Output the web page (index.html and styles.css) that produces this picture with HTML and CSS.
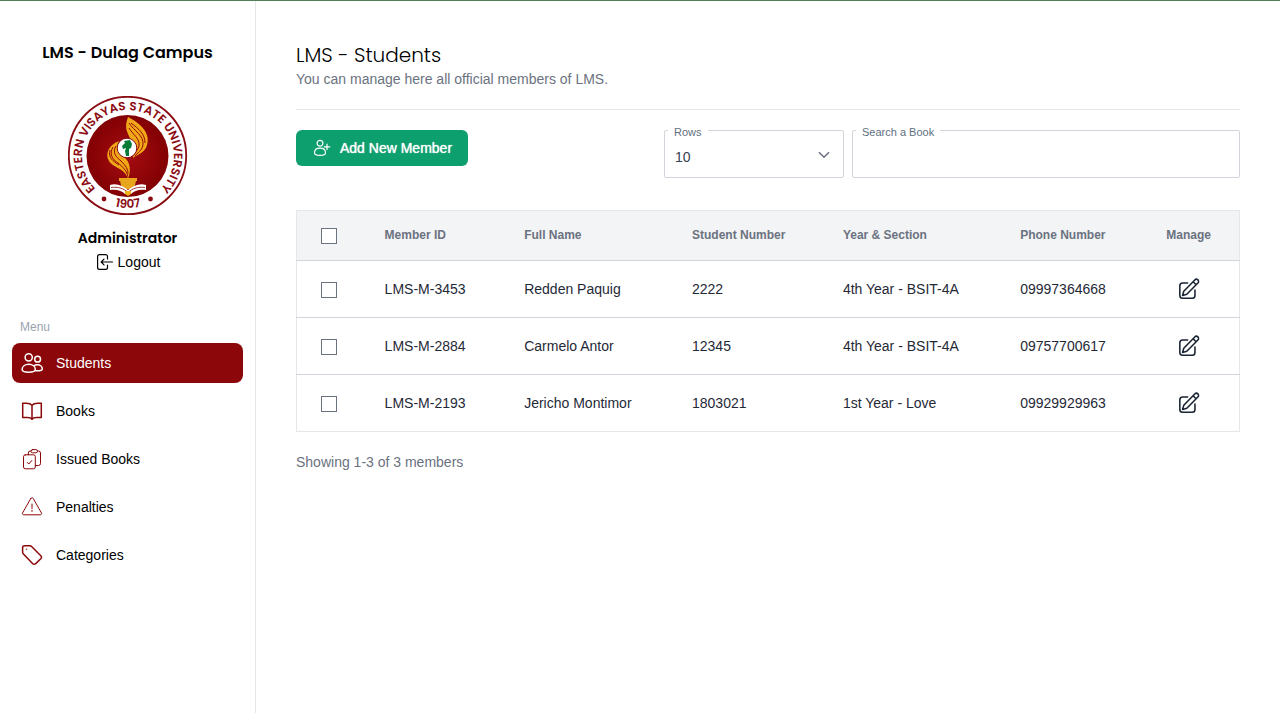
FILE: index.html
```html
<!DOCTYPE html>
<html lang="en">
<head>
<meta charset="utf-8">
<meta name="viewport" content="width=device-width, initial-scale=1">
<title>LMS - Students</title>
<link rel="stylesheet" href="styles.css">
</head>
<body>
<svg class="sprite" aria-hidden="true">
  <symbol id="edit" viewBox="0 0 24 24"><path d="M10.500 5.500H5a3 3 0 0 0-3 3v10.500a3 3 0 0 0 3 3h10.500a3 3 0 0 0 3-3v-6"/><path d="M6.300 14.400 18.300 2.100a2.400 2.400 0 0 1 3.400 3.400L9.600 17.700 5 19zM16.500 4.100l3.300 3.300"/></symbol>
</svg>
<div class="app">
  <aside class="sidebar">
    <h2 class="brand">LMS - Dulag Campus</h2>
    <svg class="seal" viewBox="0 0 120 120" role="img" aria-label="Eastern Visayas State University seal">
      <defs>
        <radialGradient id="field"><stop offset="0" stop-color="#a50d10"/><stop offset="1" stop-color="#820003"/></radialGradient>
        <path id="arc" d="M33.600 97.700A46 46 0 1 1 86.400 97.700"/>
        <path id="base" d="M35 106Q60 118 85 106"/>
      </defs>
      <circle cx="59.500" cy="59.500" r="58.700" fill="#fff" stroke="#8b0b12" stroke-width="1.800"/>
      <circle cx="59.500" cy="60" r="41" fill="url(#field)"/>
      <text class="seal-text"><textPath href="#arc" startOffset="50%" text-anchor="middle">EASTERN VISAYAS STATE UNIVERSITY</textPath></text>
      <text class="seal-text"><textPath href="#base" startOffset="50%" text-anchor="middle">1907</textPath></text>
      <circle cx="36" cy="103" r="2.400" fill="#8b0b12"/><circle cx="82.500" cy="103" r="2.400" fill="#8b0b12"/>
      <path fill="#f0a818" d="M60 21c12 6 23 16 19 28-2 8-9 9-14 13 1-8 1-12-2-18-4-8-7-12-3-23zM51 45c-11 4-14 14-10 20 4 7 16 7 19 18 3-8 3-17-5-23-5-4-8-7-4-15z"/>
      <path fill="none" stroke="#96060a" stroke-width="1" d="M61 27c5 8 15 12 14 22-1 6-6 8-8 11M61 32c4 7 11 10 10 18-1 4-4 6-5 9M63 27c8 6 14 11 14 20M45 51c-4 7-1 12 5 16 5 4 9 8 10 14M48 50c-4 7 0 11 5 15 5 5 7 8 7 13M42 54c-2 8 3 11 9 15"/>
      <circle cx="59" cy="52" r="9.800" fill="#fff" stroke="#8b0b12" stroke-width="1"/>
      <path fill="#087c37" d="M56 45l6-1 2 4-1 4-2 1v7h-3l-1-5 1-3-3 1-1-3 3-3z"/>
      <path fill="#e7a51d" d="M51 82h18v3h-1l-2 8H54l-2-8h-1z"/>
      <path fill="#fff" d="M42 89c7-2 13 1 18 5 5-4 11-7 18-5v5c-7-1-12 1-15 4h-6c-3-3-8-5-15-4z"/>
      <path fill="none" stroke="#8b0b12" stroke-width=".800" d="M43 91.500c7-1 13 1 17 5 4-4 10-6 17-5"/>
      <path fill="#f0b31a" d="M57 95h6v3l-3 2-3-2z"/>
    </svg>
    <div class="user">Administrator</div>
    <a class="logout" href="#"><svg class="icon icon-small" viewBox="0 0 16 16"><path d="M10.500 5V2.500A1.900 1.900 0 0 0 8.600.6H2.500A1.900 1.900 0 0 0 .6 2.500v11a1.900 1.900 0 0 0 1.900 1.900h6.100a1.900 1.900 0 0 0 1.900-1.900V11M15.500 8H4.500M7 5.200 4.200 8 7 10.800"/></svg>Logout</a>
    <nav class="menu" aria-label="Menu">
      <span class="menu-title">Menu</span>
      <a class="item item-active" href="#"><svg class="icon icon-nav icon-bold" viewBox="0 0 20 20"><circle cx="6.700" cy="4.300" r="3.600"/><circle cx="15.600" cy="6.200" r="2.900"/><path d="M.1 16.600C.1 13.400 3 11.300 6.800 11.300s6.500 2.100 6.500 5.300c0 1.700-2.500 2.600-6.600 2.600S.1 18.300.1 16.600zM12 12.800c1-.7 2.200-1 3.300-1 3 0 5 2 5 4.100 0 1.200-2 1.800-5 1.900h-2"/></svg>Students</a>
      <a class="item" href="#"><svg class="icon icon-nav icon-bold" viewBox="0 0 20 20"><path d="M10 4.300C8.800 2.900 7 2.200 4.500 2.200H.7v14.400h4.500c2.300 0 3.900.4 4.800 1.700.9-1.300 2.500-1.700 4.800-1.700h4.500V2.200h-3.800c-2.500 0-4.300.7-5.500 2.100zM10 4.300v14"/></svg>Books</a>
      <a class="item" href="#"><svg class="icon icon-nav icon-thin" viewBox="0 0 20 20"><path d="M6.300 5.800V4A2 2 0 0 1 8.300 2h.5M15.700 2h.8a2 2 0 0 1 2 2v10.500a2 2 0 0 1-2 2h-3.200"/><rect x="9" y=".6" width="6.500" height="3.200" rx="1.600"/><rect x="1.500" y="5.800" width="11.800" height="14" rx="1.800"/><path d="M5.300 13.500l1.500 1.500 3-3.500"/></svg>Issued Books</a>
      <a class="item" href="#"><svg class="icon icon-nav icon-thin" viewBox="0 0 20 20"><path d="M8.800 1.400.6 15.900c-.5 1 .1 1.900 1.200 1.900h16.400c1.100 0 1.700-.9 1.200-1.900L11.200 1.400c-.6-.9-1.800-.9-2.400 0zM10 7v4.500M10 13.200v1.200"/></svg>Penalties</a>
      <a class="item" href="#"><svg class="icon icon-nav icon-bold" viewBox="0 0 20 20"><path d="M.6 2.800v4.400c0 .6.200 1.100.6 1.500l9.300 9.900c.9 1 2.300 1 3.200 0l5.100-4.800c.9-.9.9-2.200 0-3.100L9.600 1.500C9 .9 8.500.7 7.900.7H2.700C1.500.7.600 1.600.6 2.800z"/><path class="icon-dot" d="M4.200 4.200h.7"/></svg>Categories</a>
    </nav>
  </aside>
  <main class="main">
    <header class="head">
      <h1 class="title">LMS - Students</h1>
      <p class="subtitle">You can manage here all official members of LMS.</p>
    </header>
    <div class="toolbar">
      <button class="add" type="button"><svg class="icon icon-add" viewBox="0 0 16 16"><circle cx="6" cy="3.300" r="2.900"/><path d="M.5 13c0-3 2.300-4.800 5.500-4.800s5.500 1.800 5.500 4.800c0 1.600-2 2.400-5.500 2.400S.5 14.600.5 13zM10.200 6.800h5.600M13 4v5.600"/></svg>Add New Member</button>
      <div class="field field-rows">
        <label class="label" for="rows">Rows</label>
        <select class="control" id="rows"><option>10</option><option>25</option><option>50</option></select>
        <svg class="chevron" viewBox="0 0 12 8"><path d="M1 1.200 6 6.200 11 1.200"/></svg>
      </div>
      <div class="field field-search">
        <label class="label" for="search">Search a Book</label>
        <input class="control" id="search" type="text">
      </div>
    </div>
    <table class="table">
      <colgroup><col class="c-check"><col class="c-id"><col class="c-name"><col class="c-number"><col class="c-section"><col class="c-phone"><col class="c-manage"></colgroup>
      <thead>
        <tr><th><input class="check" type="checkbox" aria-label="Select all"></th><th>Member ID</th><th>Full Name</th><th>Student Number</th><th>Year &amp; Section</th><th>Phone Number</th><th>Manage</th></tr>
      </thead>
      <tbody>
        <tr><td><input class="check" type="checkbox" aria-label="Select LMS-M-3453"></td><td>LMS-M-3453</td><td>Redden Paquig</td><td>2222</td><td>4th Year - BSIT-4A</td><td>09997364668</td><td><button class="edit" type="button" aria-label="Edit Redden Paquig"><svg class="icon icon-edit"><use href="#edit"/></svg></button></td></tr>
        <tr><td><input class="check" type="checkbox" aria-label="Select LMS-M-2884"></td><td>LMS-M-2884</td><td>Carmelo Antor</td><td>12345</td><td>4th Year - BSIT-4A</td><td>09757700617</td><td><button class="edit" type="button" aria-label="Edit Carmelo Antor"><svg class="icon icon-edit"><use href="#edit"/></svg></button></td></tr>
        <tr><td><input class="check" type="checkbox" aria-label="Select LMS-M-2193"></td><td>LMS-M-2193</td><td>Jericho Montimor</td><td>1803021</td><td>1st Year - Love</td><td>09929929963</td><td><button class="edit" type="button" aria-label="Edit Jericho Montimor"><svg class="icon icon-edit"><use href="#edit"/></svg></button></td></tr>
      </tbody>
    </table>
    <p class="summary">Showing 1-3 of 3 members</p>
  </main>
</div>
</body>
</html>
```
FILE: styles.css
```css
*, *::before, *::after { box-sizing: border-box; }
body {
  margin: 0;
  font: 14px/20px "Liberation Sans", Arial, sans-serif;
  color: #000;
  background: #fff;
}
h1, h2, p { margin: 0; }
a { color: inherit; text-decoration: none; }
button, input, select { font: inherit; color: inherit; }

.sprite { position: absolute; width: 0; height: 0; }
.app { display: flex; min-height: 100vh; border-top: 1px solid #4d8056; }

.sidebar {
  flex: 0 0 256px;
  display: flex;
  flex-direction: column;
  align-items: center;
  padding: 40px 12px 0;
  border-right: 1px solid #e5e7eb;
}
.brand, .user { font-family: Poppins, Inter, sans-serif; }
.brand { font-size: 16px; font-weight: 600; line-height: 24px; white-space: nowrap; }
.seal { width: 120px; height: 120px; margin: 31px 0 12px; }
.seal-text { font: 600 12px Poppins, sans-serif; fill: #8b0b12; }
.user { font-size: 14px; font-weight: 600; line-height: 20px; }
.logout { display: flex; align-items: center; gap: 5px; margin-top: 4px; padding-left: 2px; }

.icon { flex: none; fill: none; stroke: currentColor; stroke-width: 1.2; stroke-linecap: round; stroke-linejoin: round; overflow: visible; }
.icon-small { width: 16px; height: 16px; }
.icon-nav { width: 20px; height: 20px; }
.icon-add { width: 16px; height: 16px; }
.icon-bold { stroke-width: 1.5; }
.icon-thin { stroke-width: 1; }
.icon-dot { stroke-width: 1; }
.icon-edit { display: block; width: 22px; height: 22px; stroke-width: 1.7; }

.menu { align-self: stretch; display: flex; flex-direction: column; gap: 8px; margin-top: 47px; }
.menu-title { padding-left: 8px; font-size: 12px; line-height: 16px; color: #9ca3af; }
.item { display: flex; align-items: center; gap: 14px; height: 40px; padding: 0 10px; border-radius: 8px; }
.item .icon { color: #8c0709; }
.item-active { background: #8c0709; color: #fff; }
.item-active .icon { color: #fff; }

.main { flex: 1; min-width: 0; padding: 40px; }
.head { padding-bottom: 20px; border-bottom: 1px solid #e5e7eb; }
.title { font: 300 20px/28px Poppins, Inter, sans-serif; }
.subtitle { color: #6b7280; }

.toolbar { display: flex; align-items: flex-start; gap: 8px; margin: 20px 0 32px; }
.add {
  display: flex;
  align-items: center;
  gap: 10px;
  height: 36px;
  margin-right: auto;
  padding: 0 16px 0 18px;
  border: 0;
  border-radius: 6px;
  background: #0e9f6e;
  color: #fff;
  text-shadow: 0 0 1px #fff;
  white-space: nowrap;
}
.field { position: relative; }
.field-rows { flex: 0 0 180px; }
.field-search { flex: 0 1 388px; }
.label {
  position: absolute;
  top: -4px;
  left: 4px;
  padding: 0 6px;
  background: #fff;
  color: #607080;
  font-size: 11px;
  line-height: 12px;
}
.control {
  display: block;
  width: 100%;
  height: 48px;
  padding: 6px 10px 0;
  border: 1px solid #d1d5db;
  border-radius: 2px;
  background: #fff;
  color: #374151;
  appearance: none;
}
.chevron { position: absolute; top: 21px; right: 14px; width: 12px; height: 8px; fill: none; stroke: #6b7280; stroke-width: 1.6; pointer-events: none; }

.table { width: 100%; table-layout: fixed; border-collapse: collapse; border: 1px solid #e5e7eb; }
.c-check { width: 6.8%; }
.c-id { width: 14.8%; }
.c-name { width: 17.8%; }
.c-number { width: 16%; }
.c-section { width: 18.8%; }
.c-phone { width: 15.5%; }
.c-manage { width: 10.3%; }
.table th, .table td { padding: 0 0 0 24px; text-align: left; white-space: nowrap; }
.table th { height: 50px; padding-bottom: 2px; background: #f3f4f6; color: #6b7280; font-size: 12px; }
.table td { height: 57px; border-top: 1px solid #d1d5db; color: #1f2937; }
.check { display: block; width: 16px; height: 16px; margin: 2px 0 0; appearance: none; border: 1px solid #6b7280; background: #fff; }
.check:checked { background: #8c0709; }
.edit { display: block; padding: 0; margin-left: 12px; border: 0; background: none; color: #1a2333; }
.summary { margin-top: 20px; color: #6b7280; }
```
